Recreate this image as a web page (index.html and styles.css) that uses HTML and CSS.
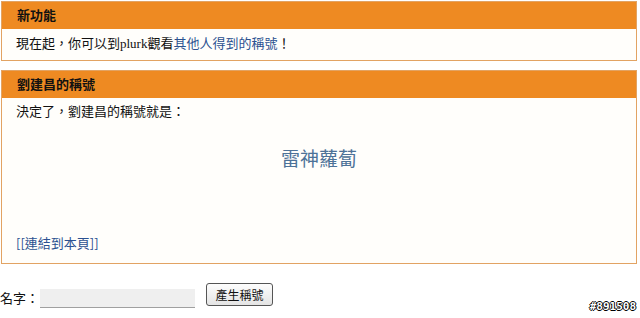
FILE: index.html
```html
<!DOCTYPE html>
<html lang="zh-Hant">
<head>
  <meta charset="UTF-8">
  <title>稱號產生器</title>
  <link rel="stylesheet" href="styles.css">
</head>
<body>
  <div class="box">
    <div class="box-title">新功能</div>
    <div class="box-body">
      現在起，你可以到plurk觀看<a href="#">其他人得到的稱號</a>！
    </div>
  </div>

  <div class="box box-result">
    <div class="box-title">劉建昌的稱號</div>
    <div class="box-body">
      <div class="intro">決定了，劉建昌的稱號就是：</div>
      <div class="nickname">雷神蘿蔔</div>
      <a class="permalink" href="#">[[連結到本頁]]</a>
    </div>
  </div>

  <form class="name-form">
    <label for="name">名字：</label>
    <input type="text" id="name" name="name">
    <button type="button">產生稱號</button>
  </form>

  <div class="stamp">#891508</div>
</body>
</html>
```

FILE: styles.css
```css
body {
  margin: 0;
  font-family: "Liberation Serif", "Noto Sans CJK TC", serif;
  font-size: 13px;
  color: #111;
  background-color: #fff;
}
a {
  color: #2b5190;
  text-decoration: none;
  font-family: "Noto Sans CJK TC", sans-serif;
}
.box {
  margin: 1px 3px 0 1px;
  border: 1px solid #e2a363;
  background-color: #fffefb;
}
.box-result {
  margin-top: 9px;
}
.box-title {
  background-color: #ee8a22;
  height: 27px;
  line-height: 26px;
  padding-left: 15px;
  font-weight: bold;
  font-family: "Noto Sans CJK TC", sans-serif;
}
.box-body {
  padding: 6px 14px 9px;
  line-height: 15px;
  font-family: "Liberation Serif", "Noto Sans CJK TC", serif;
}
.box-result .box-body {
  padding-top: 5px;
  padding-bottom: 13px;
}
.intro {
  font-family: "Noto Sans CJK TC", sans-serif;
}
.nickname {
  margin-top: 28px;
  text-align: center;
  font-family: "Noto Sans CJK TC", sans-serif;
  font-size: 19px;
  line-height: 24px;
  color: #4d7298;
}
.permalink {
  display: block;
  margin-top: 65px;
}
.name-form {
  display: flex;
  align-items: flex-end;
  margin-top: 19px;
  height: 25px;
}
.name-form label {
  font-family: "Noto Sans CJK TC", sans-serif;
  line-height: 16px;
  padding-bottom: 2px;
}
.name-form input {
  margin: 0 0 0 1px;
  width: 155px;
  height: 18px;
  padding: 0;
  border: none;
  border-bottom: 1px solid #a0a0a0;
  background-color: #efefef;
}
.name-form button {
  margin: 0 0 1px 11px;
  align-self: flex-start;
  width: 67px;
  height: 23px;
  padding: 0;
  border: 1px solid #555;
  border-radius: 3px;
  background: linear-gradient(#fdfdfd, #e4e4e4);
  font-family: "Noto Sans CJK TC", sans-serif;
  font-size: 12px;
  color: #111;
}
.stamp {
  position: absolute;
  right: 4px;
  top: 300px;
  font-family: "DejaVu Sans Mono", monospace;
  font-size: 11px;
  font-weight: bold;
  color: #fff;
  text-shadow: 1px 0 0 #000, -1px 0 0 #000, 0 1px 0 #000, 0 -1px 0 #000;
}
```
